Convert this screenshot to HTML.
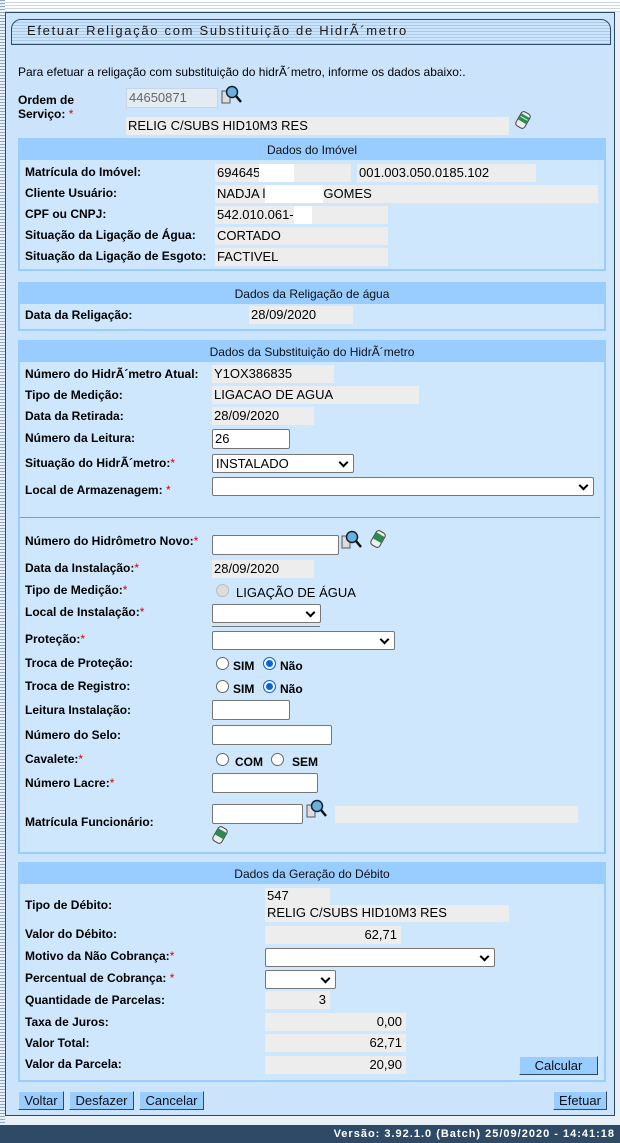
<!DOCTYPE html>
<html><head><meta charset="utf-8"><style>
*{margin:0;padding:0;box-sizing:border-box}
body{width:620px;height:1143px;position:relative;overflow:hidden;background:#e8f1f8;font-family:"Liberation Sans",Arial,sans-serif;font-size:12px;color:#000}
.a{position:absolute}
.panel{left:5px;top:12px;width:610px;height:1104px;background:#cbe4fb;border:1px solid #2e4a66}
.lstrip{left:0;top:0;width:5px;height:1143px;background:repeating-linear-gradient(#8fa9c4 0 1px,#e8f1f8 1px 3px)}
.tstrip{left:0;top:0;width:620px;height:12px;background:repeating-linear-gradient(#fff 0 2px,#c5d8ea 2px 3px)}
.title{left:11px;top:19px;width:600px;height:26px;border:1px solid #2e4a66;border-radius:10px 10px 0 0;background:repeating-linear-gradient(#cbe4fb 0 2px,#a9c9e6 2px 3px);padding:3px 0 0 15px;letter-spacing:1.7px;font-size:13px;color:#1a1a1a}
.sec{border:2px solid #99ccff;background:#cfe7fd}
.hd{position:absolute;left:0;top:0;right:0;height:20px;background:#99ccff;text-align:center;line-height:20px;color:#111}
.l{position:absolute;font-weight:bold;white-space:nowrap;line-height:14px}
.v{position:absolute;background:#ededed;height:18px;line-height:18px;padding-left:2px;white-space:nowrap;font-size:13px}
.r{text-align:right;padding-right:4px}
.in{position:absolute;background:#fff;border:1px solid #767676;height:20px;border-radius:2px;font-size:13px;line-height:18px;padding-left:2px}
.sel{position:absolute;background:#fff;border:1px solid #767676;height:19px;border-radius:2px;font-size:13px;line-height:17px;padding-left:3px}
.sel:after{content:"";position:absolute;right:6px;top:4px;width:5px;height:5px;border-right:2px solid #000;border-bottom:2px solid #000;transform:rotate(45deg)}
.req{color:#d00;font-weight:normal}
.rad{position:absolute;width:13px;height:13px;border:1px solid #666;border-radius:50%;background:#fff}
.rad.on{border-color:#0a64d8;box-shadow:inset 0 0 0 2px #fff;background:#0a64d8}
.rt{position:absolute;font-weight:bold;font-size:12px}
.btn{position:absolute;height:19px;background:#99ccff;border:1px solid #2e4a66;border-top-color:#cfe7fd;border-left-color:#cfe7fd;text-align:center;line-height:17px;font-size:13px;color:#111}
.foot{left:0;top:1125px;width:620px;height:18px;background:#2f4a66;color:#fff;font-weight:bold;font-size:11px;letter-spacing:1px;text-align:right;padding-right:5px;line-height:18px}
</style></head><body>
<div class="a tstrip"></div>
<div class="a lstrip"></div>
<div class="a panel"></div>
<div class="a title">Efetuar Religação com Substituição de HidrÃ´metro</div>
<div class="a" style="left:18px;top:65px">Para efetuar a religação com substituição do hidrÃ´metro, informe os dados abaixo:.</div>
<div class="l" style="left:18px;top:93px">Ordem de<br>Serviço: <span class="req">*</span></div>
<div class="v" style="left:126px;top:88px;width:92px;height:20px;background:#e3ebf3;border:1px solid #c8d6e4;color:#666">44650871</div>
<svg class="a" style="left:221px;top:84px" width="22" height="22" viewBox="0 0 22 22"><rect x="1" y="7" width="8" height="12" fill="#ddd" stroke="#555"/><circle cx="11" cy="8" r="5.5" fill="#6ab0dc" stroke="#123" stroke-width="1.5"/><path d="M15 12l5 6" stroke="#111" stroke-width="2.5"/></svg>
<div class="v" style="left:126px;top:117px;width:383px">RELIG C/SUBS HID10M3 RES</div>
<svg class="a" style="left:514px;top:110px" width="18" height="20" viewBox="0 0 18 20"><g transform="rotate(30 9 10)"><rect x="4" y="2" width="10" height="16" rx="3" fill="#eee" stroke="#444"/><rect x="4.5" y="5" width="9" height="7" fill="#2d8a4e"/><path d="M5 8h8" stroke="#bfe" stroke-width="1"/></g></svg>

<div class="a sec" style="left:18px;top:138px;width:588px;height:133px"><div class="hd">Dados do Imóvel</div></div>
<div class="l" style="left:25px;top:165px">Matrícula do Imóvel:</div>
<div class="v" style="left:215px;top:164px;width:136px">694645</div>
<div class="a" style="left:259px;top:164px;width:35px;height:18px;background:#fff"></div>
<div class="v" style="left:357px;top:164px;width:179px">001.003.050.0185.102</div>
<div class="l" style="left:25px;top:186px">Cliente Usuário:</div>
<div class="v" style="left:215px;top:185px;width:383px">NADJA l<span style="display:inline-block;width:58px;height:18px;background:#fff;vertical-align:top"></span>GOMES</div>
<div class="l" style="left:25px;top:207px">CPF ou CNPJ:</div>
<div class="v" style="left:215px;top:206px;width:173px">542.010.061-<span style="display:inline-block;width:18px;height:18px;background:#fff;vertical-align:top"></span></div>
<div class="l" style="left:25px;top:228px">Situação da Ligação de Água:</div>
<div class="v" style="left:215px;top:227px;width:173px">CORTADO</div>
<div class="l" style="left:25px;top:249px">Situação da Ligação de Esgoto:</div>
<div class="v" style="left:215px;top:248px;width:173px">FACTIVEL</div>

<div class="a sec" style="left:18px;top:282px;width:588px;height:49px"><div class="hd">Dados da Religação de água</div></div>
<div class="l" style="left:25px;top:308px">Data da Religação:</div>
<div class="v" style="left:249px;top:306px;width:104px">28/09/2020</div>

<div class="a sec" style="left:18px;top:340px;width:588px;height:514px"><div class="hd">Dados da Substituição do HidrÃ´metro</div></div>
<div class="l" style="left:25px;top:367px">Número do HidrÃ´metro Atual:</div>
<div class="v" style="left:212px;top:365px;width:122px">Y1OX386835</div>
<div class="l" style="left:25px;top:388px">Tipo de Medição:</div>
<div class="v" style="left:212px;top:386px;width:207px">LIGACAO DE AGUA</div>
<div class="l" style="left:25px;top:409px">Data da Retirada:</div>
<div class="v" style="left:212px;top:407px;width:102px">28/09/2020</div>
<div class="l" style="left:25px;top:431px">Número da Leitura:</div>
<div class="in" style="left:212px;top:429px;width:78px">26</div>
<div class="l" style="left:25px;top:456px">Situação do HidrÃ´metro:<span class="req">*</span></div>
<div class="sel" style="left:212px;top:454px;width:142px">INSTALADO</div>
<div class="l" style="left:25px;top:483px">Local de Armazenagem: <span class="req">*</span></div>
<div class="sel" style="left:212px;top:477px;width:382px"></div>
<div class="a" style="left:20px;top:517px;width:580px;height:1px;background:#8a9aa8"></div>
<div class="l" style="left:25px;top:534px;font-weight:bold">Número do Hidrômetro Novo:<span class="req">*</span></div>
<div class="in" style="left:212px;top:535px;width:127px"></div>
<svg class="a" style="left:341px;top:529px" width="22" height="22" viewBox="0 0 22 22"><rect x="1" y="7" width="8" height="12" fill="#ddd" stroke="#555"/><circle cx="11" cy="8" r="5.5" fill="#6ab0dc" stroke="#123" stroke-width="1.5"/><path d="M15 12l5 6" stroke="#111" stroke-width="2.5"/></svg>
<svg class="a" style="left:369px;top:529px" width="18" height="20" viewBox="0 0 18 20"><g transform="rotate(30 9 10)"><rect x="4" y="2" width="10" height="16" rx="3" fill="#eee" stroke="#444"/><rect x="4.5" y="5" width="9" height="7" fill="#2d8a4e"/></g></svg>
<div class="l" style="left:25px;top:561px">Data da Instalação:<span class="req">*</span></div>
<div class="v" style="left:212px;top:560px;width:102px">28/09/2020</div>
<div class="l" style="left:25px;top:583px">Tipo de Medição:<span class="req">*</span></div>
<div class="rad" style="left:216px;top:584px;border-color:#bbb;background:#ddd"></div>
<div class="rt" style="left:236px;top:585px;font-size:13px;font-weight:normal">LIGAÇÃO DE ÁGUA</div>
<div class="l" style="left:25px;top:605px">Local de Instalação:<span class="req">*</span></div>
<div class="sel" style="left:212px;top:604px;width:109px"></div>
<div class="a" style="left:212px;top:626px;width:108px;height:1px;background:#777"></div>
<div class="l" style="left:25px;top:632px">Proteção:<span class="req">*</span></div>
<div class="sel" style="left:212px;top:631px;width:183px"></div>
<div class="l" style="left:25px;top:656px">Troca de Proteção:</div>
<div class="rad" style="left:216px;top:657px"></div><div class="rt" style="left:233px;top:659px">SIM</div>
<div class="rad on" style="left:263px;top:657px"></div><div class="rt" style="left:280px;top:659px">Não</div>
<div class="l" style="left:25px;top:679px">Troca de Registro:</div>
<div class="rad" style="left:216px;top:680px"></div><div class="rt" style="left:233px;top:682px">SIM</div>
<div class="rad on" style="left:263px;top:680px"></div><div class="rt" style="left:280px;top:682px">Não</div>
<div class="l" style="left:25px;top:703px">Leitura Instalação:</div>
<div class="in" style="left:212px;top:700px;width:78px"></div>
<div class="l" style="left:25px;top:728px">Número do Selo:</div>
<div class="in" style="left:212px;top:725px;width:120px"></div>
<div class="l" style="left:25px;top:752px">Cavalete:<span class="req">*</span></div>
<div class="rad" style="left:216px;top:753px"></div><div class="rt" style="left:235px;top:755px">COM</div>
<div class="rad" style="left:271px;top:753px"></div><div class="rt" style="left:292px;top:755px">SEM</div>
<div class="l" style="left:25px;top:776px">Número Lacre:<span class="req">*</span></div>
<div class="in" style="left:212px;top:773px;width:106px"></div>
<div class="l" style="left:25px;top:815px">Matrícula Funcionário:</div>
<div class="in" style="left:212px;top:804px;width:91px"></div>
<svg class="a" style="left:306px;top:798px" width="22" height="22" viewBox="0 0 22 22"><rect x="1" y="7" width="8" height="12" fill="#ddd" stroke="#555"/><circle cx="11" cy="8" r="5.5" fill="#6ab0dc" stroke="#123" stroke-width="1.5"/><path d="M15 12l5 6" stroke="#111" stroke-width="2.5"/></svg>
<div class="v" style="left:335px;top:806px;width:243px;height:17px"></div>
<svg class="a" style="left:211px;top:825px" width="18" height="20" viewBox="0 0 18 20"><g transform="rotate(30 9 10)"><rect x="4" y="2" width="10" height="16" rx="3" fill="#eee" stroke="#444"/><rect x="4.5" y="5" width="9" height="7" fill="#2d8a4e"/></g></svg>

<div class="a sec" style="left:18px;top:862px;width:588px;height:220px"><div class="hd">Dados da Geração do Débito</div></div>
<div class="l" style="left:25px;top:898px">Tipo de Débito:</div>
<div class="v" style="left:265px;top:888px;width:65px;height:17px;line-height:16px">547</div>
<div class="v" style="left:265px;top:905px;width:244px;height:17px;line-height:16px">RELIG C/SUBS HID10M3 RES</div>
<div class="l" style="left:25px;top:927px">Valor do Débito:</div>
<div class="v r" style="left:265px;top:926px;width:136px">62,71</div>
<div class="l" style="left:25px;top:949px">Motivo da Não Cobrança:<span class="req">*</span></div>
<div class="sel" style="left:265px;top:948px;width:230px"></div>
<div class="l" style="left:25px;top:971px">Percentual de Cobrança: <span class="req">*</span></div>
<div class="sel" style="left:265px;top:970px;width:71px"></div>
<div class="l" style="left:25px;top:993px">Quantidade de Parcelas:</div>
<div class="v r" style="left:265px;top:991px;width:65px">3</div>
<div class="l" style="left:25px;top:1015px">Taxa de Juros:</div>
<div class="v r" style="left:265px;top:1013px;width:141px">0,00</div>
<div class="l" style="left:25px;top:1036px">Valor Total:</div>
<div class="v r" style="left:265px;top:1034px;width:141px">62,71</div>
<div class="l" style="left:25px;top:1057px">Valor da Parcela:</div>
<div class="v r" style="left:265px;top:1056px;width:141px">20,90</div>
<div class="btn" style="left:519px;top:1056px;width:79px">Calcular</div>

<div class="btn" style="left:18px;top:1091px;width:46px">Voltar</div>
<div class="btn" style="left:69px;top:1091px;width:65px">Desfazer</div>
<div class="btn" style="left:139px;top:1091px;width:65px">Cancelar</div>
<div class="btn" style="left:553px;top:1091px;width:54px">Efetuar</div>

<div class="a foot">Versão: 3.92.1.0 (Batch) 25/09/2020 - 14:41:18</div>
</body></html>
